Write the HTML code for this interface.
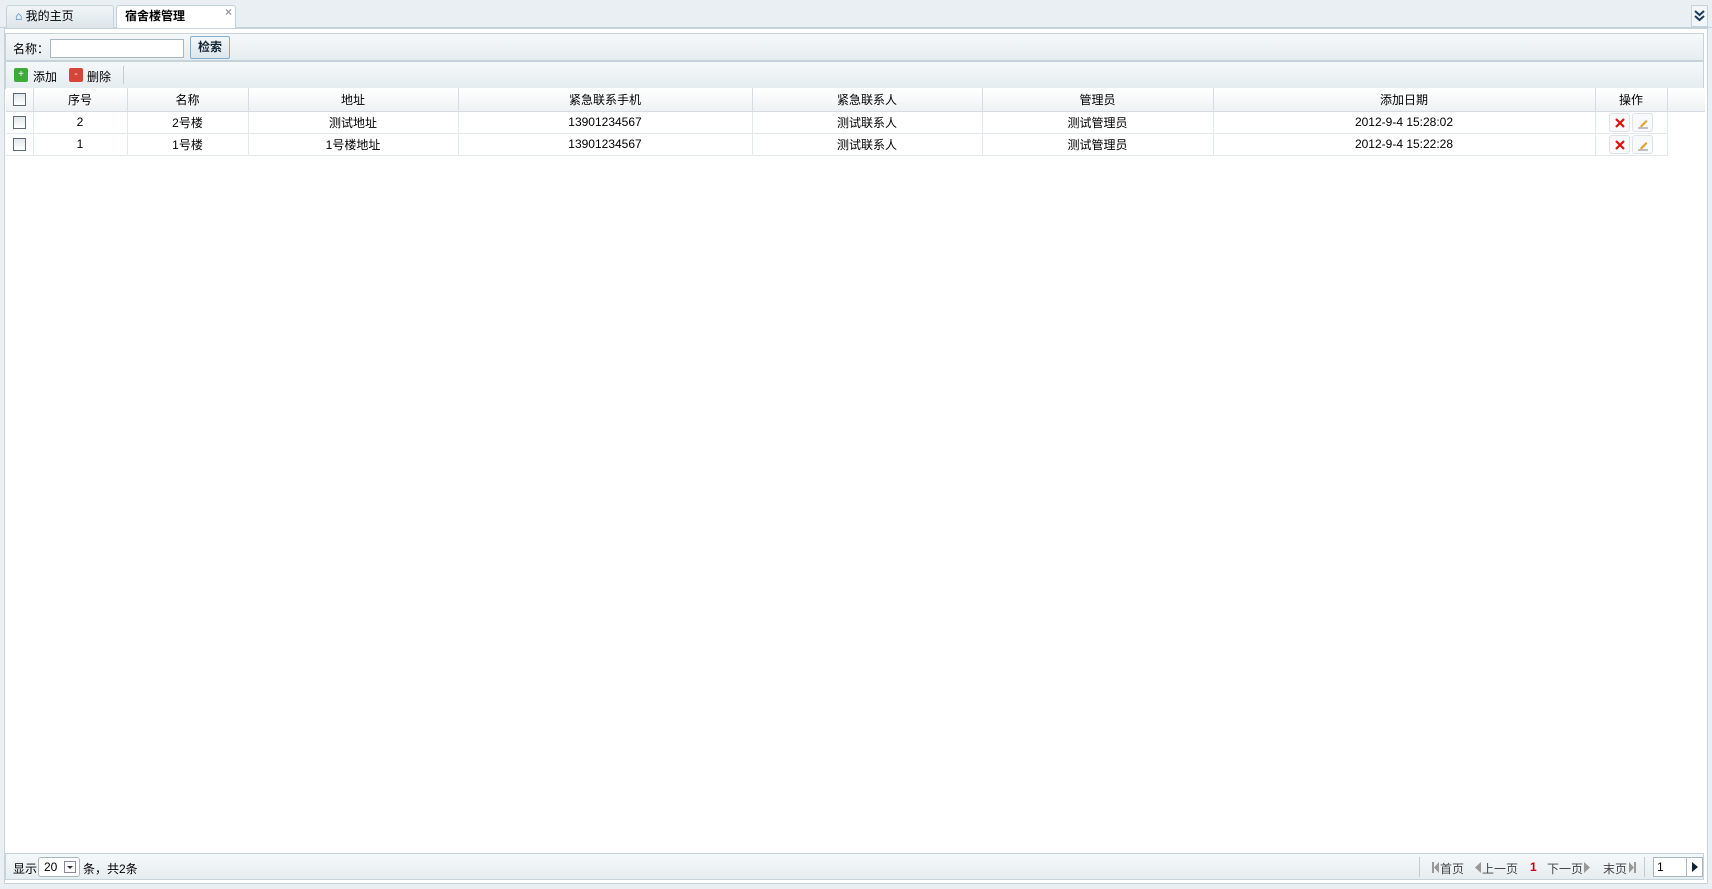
<!DOCTYPE html>
<html><head><meta charset="utf-8"><style>
*{box-sizing:border-box;margin:0;padding:0}
body{width:1712px;height:889px;background:#e9eff2;font:12px "Liberation Sans","Noto Sans CJK SC",sans-serif;color:#000;position:relative;overflow:hidden}
.abs{position:absolute}
.tab{position:absolute;top:5px;height:23px;border:1px solid #c3d3db;border-bottom:none;border-radius:3px 3px 0 0;line-height:21px;padding-left:8px}
.bar{position:absolute;left:5px;width:1699px;background:linear-gradient(#f5f8f9,#e6edf0);border:1px solid #c6d3da}
table{position:absolute;left:6px;top:88px;border-collapse:collapse;background:#fff}
td,th{height:22px;text-align:center;font-weight:normal;border-right:1px solid #e3e8eb;border-bottom:1px solid #e3e8eb;padding:0}
th{background:linear-gradient(#fff,#eef2f4);height:23px;border-color:#d5dde1}
.cb{display:inline-block;width:13px;height:13px;border:1px solid #5c6a73;background:linear-gradient(#e4e8ea,#fff);vertical-align:middle}
.ib{display:inline-block;width:21px;height:19px;border:1px solid #dde3e6;border-radius:3px;background:#f7f9fa;vertical-align:middle;margin:0 1px;position:relative}
.ib svg{position:absolute;left:4px;top:3px}
.g{color:#999}
</style></head><body>
<div class="abs" style="left:0;top:27px;width:1712px;height:1px;background:#c3d3db"></div>
<div class="tab" style="left:6px;width:108px;background:linear-gradient(#f1f5f7,#dde6ea)"><span style="color:#2a6fb0">⌂</span> 我的主页</div>
<div class="tab" style="left:116px;width:120px;background:#fff;height:24px;font-weight:bold;padding-left:8px">宿舍楼管理<span style="position:absolute;right:3px;top:-4px;color:#99a;font-weight:bold">×</span></div>
<div class="abs" style="left:1691px;top:5px;width:17px;height:22px;border:1px solid #c3d3db;background:#f2f6f8"><svg width="15" height="20" viewBox="0 0 15 20"><path d="M3 5l4.5 4 4.5-4M3 10l4.5 4 4.5-4" stroke="#1c3a5e" stroke-width="2" fill="none"/></svg></div>
<div class="abs" style="left:4px;top:28px;width:1704px;height:856px;border:1px solid #c6d3da;background:#fff"></div>
<div class="bar" style="top:33px;height:28px"><span class="abs" style="left:7px;top:6px">名称：</span>
<div class="abs" style="left:44px;top:5px;width:134px;height:19px;border:1px solid #a9b8c0;background:#fff"></div>
<div class="abs" style="left:184px;top:2px;width:40px;height:23px;border:1px solid #86aecb;border-radius:2px;background:linear-gradient(#f4f8fa,#dce6ec);font-weight:bold;text-align:center;line-height:21px;color:#123">检索</div></div>
<div class="bar" style="top:61px;height:28px">
<span class="abs" style="left:8px;top:6px;width:14px;height:14px;background:#3cab3a;border-radius:2px;color:#fff;font-size:10px;line-height:14px;text-align:center">+</span><span class="abs" style="left:27px;top:6px">添加</span>
<span class="abs" style="left:63px;top:6px;width:14px;height:14px;background:#d6443a;border-radius:2px;color:#fff;font-size:10px;line-height:14px;text-align:center">-</span><span class="abs" style="left:81px;top:6px">删除</span>
<span class="abs" style="left:117px;top:4px;width:1px;height:18px;background:#c0ccd2"></span></div>
<table>
<tr><th style="width:27px"><span class="cb"></span></th><th style="width:94px">序号</th><th style="width:121px">名称</th><th style="width:210px">地址</th><th style="width:294px">紧急联系手机</th><th style="width:230px">紧急联系人</th><th style="width:231px">管理员</th><th style="width:382px">添加日期</th><th style="width:72px">操作</th><th style="width:38px;border-right:none"></th></tr>
<tr><td><span class="cb"></span></td><td>2</td><td>2号楼</td><td>测试地址</td><td>13901234567</td><td>测试联系人</td><td>测试管理员</td><td>2012-9-4 15:28:02</td><td><span class="ib"><svg width="12" height="12"><path d="M2 2l8 8M10 2l-8 8" stroke="#d11" stroke-width="2.2"/></svg></span><span class="ib"><svg width="12" height="12"><path d="M3 9l6-6 1.5 1.5-6 6z" fill="#e0a030"/><path d="M1 11h10" stroke="#888"/></svg></span></td><td style="border:none"></td></tr>
<tr><td><span class="cb"></span></td><td>1</td><td>1号楼</td><td>1号楼地址</td><td>13901234567</td><td>测试联系人</td><td>测试管理员</td><td>2012-9-4 15:22:28</td><td><span class="ib"><svg width="12" height="12"><path d="M2 2l8 8M10 2l-8 8" stroke="#d11" stroke-width="2.2"/></svg></span><span class="ib"><svg width="12" height="12"><path d="M3 9l6-6 1.5 1.5-6 6z" fill="#e0a030"/><path d="M1 11h10" stroke="#888"/></svg></span></td><td style="border:none"></td></tr>
</table>
<div class="bar" style="top:853px;height:27px">
<span class="abs" style="left:7px;top:6px">显示</span>
<div class="abs" style="left:32px;top:3px;width:42px;height:20px;border:1px solid #a9b8c0;border-radius:3px;background:#fff;padding-left:5px;line-height:18px">20<span style="position:absolute;right:3px;top:3px;width:12px;height:12px;border:1px solid #889"><svg width="10" height="10" style="position:absolute;left:0;top:0"><path d="M2 4h6l-3 3z" fill="#333"/></svg></span></div>
<span class="abs" style="left:77px;top:6px">条，共2条</span>
<span class="abs" style="left:1413px;top:3px;width:1px;height:20px;background:#c0ccd2"></span>
<svg class="abs" style="left:1425px;top:8px" width="8" height="11"><path d="M1 0h2v11H1zM8 0v11L3 5.5z" fill="#999"/></svg>
<span class="abs" style="left:1434px;top:6px;color:#444">首页</span>
<svg class="abs" style="left:1469px;top:8px" width="6" height="11"><path d="M6 0v11L0 5.5z" fill="#999"/></svg>
<span class="abs" style="left:1476px;top:6px;color:#444">上一页</span>
<b class="abs" style="left:1524px;top:6px;color:#c00">1</b>
<span class="abs" style="left:1541px;top:6px;color:#444">下一页</span>
<svg class="abs" style="left:1578px;top:8px" width="6" height="11"><path d="M0 0v11l6-5.5z" fill="#999"/></svg>
<span class="abs" style="left:1597px;top:6px;color:#444">末页</span>
<svg class="abs" style="left:1623px;top:8px" width="8" height="11"><path d="M0 0v11l5-5.5zM5 0h2v11H5z" fill="#999"/></svg>
<span class="abs" style="left:1638px;top:3px;width:1px;height:20px;background:#c0ccd2"></span>
<div class="abs" style="left:1647px;top:3px;width:50px;height:20px;border:1px solid #a9b8c0;background:#fff;padding-left:3px;line-height:18px">1<span style="position:absolute;right:0;top:0;width:16px;height:18px;border-left:1px solid #a9b8c0"><svg width="15" height="18" style="position:absolute;left:0;top:0"><path d="M5 4v10l6-5z" fill="#123"/></svg></span></div>
</div>
</body></html>
